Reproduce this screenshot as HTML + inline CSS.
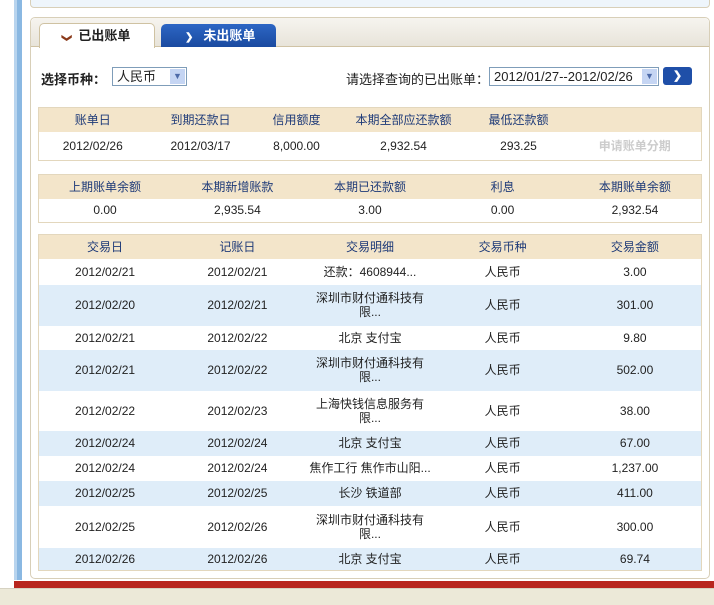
<!DOCTYPE html>
<html><head><meta charset="utf-8"><style>
*{margin:0;padding:0;box-sizing:border-box}
body{width:714px;height:605px;background:#fff;position:relative;overflow:hidden;font-family:"Liberation Sans","Noto Sans CJK SC",sans-serif;font-size:12px;color:#222}
.abs{position:absolute}
table{border-collapse:collapse;position:absolute;left:38px;width:664px;table-layout:fixed}
td{text-align:center;font-size:12px;padding:0 2px;line-height:14px}
.h td{background:#f3e5ca;color:#1e3a78}
.b{background:#dfedf9}
.t{border:1px solid #e3d7bd}
</style></head><body>
<div class="abs" style="left:14px;top:0;width:3px;height:580px;background:#b8d4ee"></div>
<div class="abs" style="left:17px;top:0;width:5px;height:580px;background:#8ab8e2"></div>
<div class="abs" style="left:30px;top:-4px;width:680px;height:12px;border:1px solid #d8cfb8;border-radius:4px;background:#eef5fb"></div>
<div class="abs" style="left:30px;top:17px;width:680px;height:562px;border:1px solid #d8cfb8;border-radius:5px;background:#fff"></div>
<div class="abs" style="left:31px;top:18px;width:678px;height:29px;background:linear-gradient(#f6f4ef,#e8e4da);border-bottom:1px solid #d0c3a5;border-radius:5px 5px 0 0"></div>
<div class="abs" style="left:39px;top:23px;width:116px;height:25px;background:#fff;border:1px solid #cfc2a2;border-bottom:none;border-radius:5px 5px 0 0;font-weight:bold;font-size:13px;line-height:24px;padding-left:22px"><span style="display:inline-block;color:#8a3a1a;font-size:10px;margin-right:8px;transform:rotate(90deg)">&#10095;</span>已出账单</div>
<div class="abs" style="left:161px;top:24px;width:115px;height:23px;background:linear-gradient(#2d66c4,#1a4aa0);border-radius:5px 5px 0 0;color:#fff;font-weight:bold;font-size:13px;line-height:23px;padding-left:24px"><span style="font-size:10px;margin-right:10px">&#10095;</span>未出账单</div>
<div class="abs" style="left:41px;top:69px;font-weight:bold;font-size:13px">选择币种：</div>
<div class="abs" style="left:112px;top:67px;width:75px;height:19px;border:1px solid #7f9db9;padding-left:4px;line-height:17px;font-size:13px">人民币<span class="abs" style="right:1px;top:1px;width:15px;height:15px;background:#c5d5f3;color:#4d6aa8;font-size:9px;text-align:center;line-height:15px">&#9660;</span></div>
<div class="abs" style="left:346px;top:69px;font-size:13px">请选择查询的已出账单：</div>
<div class="abs" style="left:489px;top:67px;width:170px;height:19px;border:1px solid #7f9db9;padding-left:4px;line-height:17px;font-size:13px">2012/01/27--2012/02/26<span class="abs" style="right:1px;top:1px;width:15px;height:15px;background:#c5d5f3;color:#4d6aa8;font-size:9px;text-align:center;line-height:15px">&#9660;</span></div>
<div class="abs" style="left:663px;top:67px;width:29px;height:18px;background:#1f4fa8;border-radius:3px;color:#fff;font-weight:bold;text-align:center;line-height:18px;font-size:11px">&#10095;</div>

<table class="t" style="top:107px"><colgroup><col style="width:108px"><col style="width:108px"><col style="width:84px"><col style="width:130px"><col style="width:100px"><col></colgroup>
<tr class="h" style="height:24px"><td>账单日</td><td>到期还款日</td><td>信用额度</td><td>本期全部应还款额</td><td>最低还款额</td><td></td></tr>
<tr style="height:29px"><td>2012/02/26</td><td>2012/03/17</td><td>8,000.00</td><td>2,932.54</td><td>293.25</td><td style="color:#ccc;font-weight:bold">申请账单分期</td></tr></table>

<table class="t" style="top:174px">
<tr class="h" style="height:24px"><td>上期账单余额</td><td>本期新增账款</td><td>本期已还款额</td><td>利息</td><td>本期账单余额</td></tr>
<tr style="height:24px"><td>0.00</td><td>2,935.54</td><td>3.00</td><td>0.00</td><td>2,932.54</td></tr></table>

<table class="t" style="top:234px">
<tr class="h" style="height:24px"><td>交易日</td><td>记账日</td><td>交易明细</td><td>交易币种</td><td>交易金额</td></tr>
<tr style="height:26px"><td>2012/02/21</td><td>2012/02/21</td><td>还款：4608944...</td><td>人民币</td><td>3.00</td></tr>
<tr class="b" style="height:41px"><td>2012/02/20</td><td>2012/02/21</td><td>深圳市财付通科技有<br>限...</td><td>人民币</td><td>301.00</td></tr>
<tr style="height:24px"><td>2012/02/21</td><td>2012/02/22</td><td>北京 支付宝</td><td>人民币</td><td>9.80</td></tr>
<tr class="b" style="height:41px"><td>2012/02/21</td><td>2012/02/22</td><td>深圳市财付通科技有<br>限...</td><td>人民币</td><td>502.00</td></tr>
<tr style="height:40px"><td>2012/02/22</td><td>2012/02/23</td><td>上海快钱信息服务有<br>限...</td><td>人民币</td><td>38.00</td></tr>
<tr class="b" style="height:25px"><td>2012/02/24</td><td>2012/02/24</td><td>北京 支付宝</td><td>人民币</td><td>67.00</td></tr>
<tr style="height:25px"><td>2012/02/24</td><td>2012/02/24</td><td>焦作工行 焦作市山阳...</td><td>人民币</td><td>1,237.00</td></tr>
<tr class="b" style="height:25px"><td>2012/02/25</td><td>2012/02/25</td><td>长沙 铁道部</td><td>人民币</td><td>411.00</td></tr>
<tr style="height:42px"><td>2012/02/25</td><td>2012/02/26</td><td>深圳市财付通科技有<br>限...</td><td>人民币</td><td>300.00</td></tr>
<tr class="b" style="height:23px"><td>2012/02/26</td><td>2012/02/26</td><td>北京 支付宝</td><td>人民币</td><td>69.74</td></tr>
</table>

<div class="abs" style="left:14px;top:581px;width:700px;height:7px;background:#b8261e"></div>
<div class="abs" style="left:0;top:588px;width:714px;height:17px;background:#ece9d8;border-top:1px solid #d6d2c2"></div>
</body></html>
